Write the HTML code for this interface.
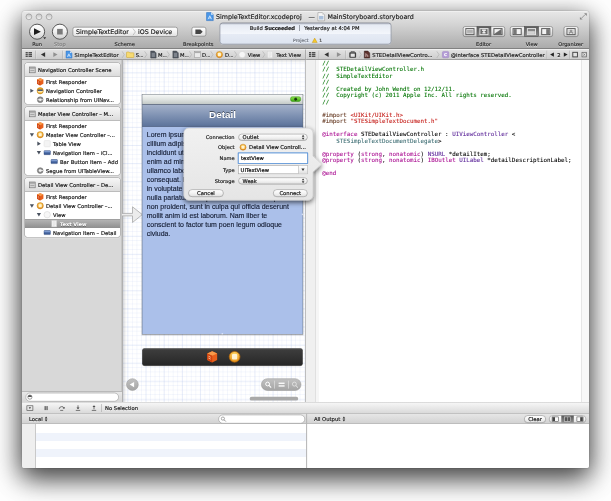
<!DOCTYPE html><html><head><meta charset="utf-8"><title>Xcode</title><style>
html,body{margin:0;padding:0;background:#fff;}
body{width:611px;height:501px;overflow:hidden;position:relative;font-family:"DejaVu Sans","Liberation Sans",sans-serif;}
div{position:absolute;box-sizing:border-box;}
.t{white-space:nowrap;line-height:10px;font-family:"DejaVu Sans","Liberation Sans",sans-serif;-webkit-text-stroke-width:.17px;text-shadow:0 .5px 0 rgba(255,255,255,.55);}
.p{white-space:nowrap;line-height:10px;font-family:"DejaVu Sans","Liberation Sans",sans-serif;-webkit-text-stroke-width:.17px;}
.e{letter-spacing:-.3px;opacity:.75}
.n{white-space:nowrap;font-family:"Liberation Sans",sans-serif;}
.m{white-space:pre;font-family:"DejaVu Sans Mono","Liberation Mono",monospace;font-size:5.84px;line-height:6.5px;color:#000;-webkit-text-stroke:.08px;}
svg{position:absolute;overflow:visible;}
#win{left:22px;top:11px;width:567px;height:457px;border-radius:3px 3px 2px 2px;background:#e4e4e4;
 box-shadow:0 0 1.2px rgba(0,0,0,.45),0 6px 24px rgba(0,0,0,.5),0 12px 28px rgba(0,0,0,.5);}
#clip{left:0;top:0;width:567px;height:457px;border-radius:3px 3px 2px 2px;overflow:hidden;}
#in{left:-22px;top:-11px;width:611px;height:501px;will-change:transform;}
.cm{color:#007400;-webkit-text-stroke-color:#007400}.pp{color:#643820;-webkit-text-stroke-color:#643820}.st{color:#c41a16;-webkit-text-stroke-color:#c41a16}.kw{color:#aa0d91;-webkit-text-stroke-color:#aa0d91}.cl{color:#5c2699;-webkit-text-stroke-color:#5c2699}.pc{color:#3f6e74;-webkit-text-stroke-color:#3f6e74}
</style></head><body>
<svg width="0" height="0" style="left:0;top:0"><defs>
<linearGradient id="gBtn" x1="0" y1="0" x2="0" y2="1"><stop offset="0" stop-color="#ffffff"/><stop offset=".5" stop-color="#f3f3f3"/><stop offset="1" stop-color="#dfdfdf"/></linearGradient>
<linearGradient id="gTb" x1="0" y1="0" x2="0" y2="1"><stop offset="0" stop-color="#f9f9f9"/><stop offset=".5" stop-color="#e6e6e6"/><stop offset="1" stop-color="#c9c9c9"/></linearGradient>
<linearGradient id="gSel" x1="0" y1="0" x2="0" y2="1"><stop offset="0" stop-color="#595959"/><stop offset="1" stop-color="#8c8c8c"/></linearGradient>
<linearGradient id="gRnd" x1="0" y1="0" x2="0" y2="1"><stop offset="0" stop-color="#ffffff"/><stop offset=".45" stop-color="#f2f2f2"/><stop offset="1" stop-color="#d0d0d0"/></linearGradient>
<linearGradient id="gAct" x1="0" y1="0" x2="0" y2="1"><stop offset="0" stop-color="#cfd6e4"/><stop offset=".1" stop-color="#e6ebf4"/><stop offset=".5" stop-color="#f3f6fb"/><stop offset=".52" stop-color="#e6ebf5"/><stop offset="1" stop-color="#dde4f0"/></linearGradient>
<linearGradient id="gPill" x1="0" y1="0" x2="0" y2="1"><stop offset="0" stop-color="#c2c2c2"/><stop offset="1" stop-color="#a4a4a4"/></linearGradient>
<linearGradient id="gTl" x1="0" y1="0" x2="0" y2="1"><stop offset="0" stop-color="#c4c4c4"/><stop offset="1" stop-color="#f4f4f4"/></linearGradient>
<radialGradient id="gVc" cx=".5" cy=".3" r=".75"><stop offset="0" stop-color="#ffdc6a"/><stop offset="1" stop-color="#e58a10"/></radialGradient>
<linearGradient id="gPop" x1="0" y1="0" x2="0" y2="1"><stop offset="0" stop-color="#f1f1f1"/><stop offset="1" stop-color="#e5e5e5"/></linearGradient>
<filter id="ps" x="-20%" y="-20%" width="140%" height="150%"><feGaussianBlur in="SourceAlpha" stdDeviation="2.8"/><feOffset dy="2.2"/><feComponentTransfer><feFuncA type="linear" slope=".62"/></feComponentTransfer><feMerge><feMergeNode/><feMergeNode in="SourceGraphic"/></feMerge></filter>
</defs></svg>
<div id="win"><div id="clip"><div id="in">
<div style="left:22px;top:11px;width:567px;height:38px;background:linear-gradient(#e6e6e6 0%,#d6d6d6 30%,#a9a9a9 100%);border-top:1px solid #f0f0f0;"></div>
<div style="left:22px;top:48px;width:567px;height:1px;background:#818181;"></div>
<svg style="left:22px;top:10px" width="37" height="15"><g transform="translate(-22,-10)"><circle cx="28.9" cy="16.8" r="2.9" fill="url(#gTl)" stroke="#8a8a8a" stroke-width=".6"/><circle cx="39" cy="16.8" r="2.9" fill="url(#gTl)" stroke="#8a8a8a" stroke-width=".6"/><circle cx="49.1" cy="16.8" r="2.9" fill="url(#gTl)" stroke="#8a8a8a" stroke-width=".6"/></g></svg>
<svg style="left:203px;top:9px" width="15" height="16"><g transform="translate(-203,-9)"><g transform="translate(206.228,12.280000000000001) scale(1.08)"><path d="M0.3 0.3h4.2l2 2v5.4h-6.2z" fill="#4a97e8" stroke="#2b6fc0" stroke-width=".5"/><path d="M4.5 .3v2h2z" fill="#d6e8fb"/><path d="M1.7 6.4l1.6-3.2 1.6 3.2M2.3 5.3h2" stroke="#fff" stroke-width=".6" fill="none"/></g></g></svg>
<div class="t" style="left:216.1px;top:11.90px;font-size:6.33px;color:#1a1a1a;-webkit-text-stroke-color:#1a1a1a;">SimpleTextEditor.xcodeproj</div>
<div class="t" style="left:308.6px;top:11.70px;font-size:6.33px;color:#333;-webkit-text-stroke-color:#333;">—</div>
<svg style="left:314px;top:9px" width="15" height="16"><g transform="translate(-314,-9)"><g transform="translate(317.6,12.3)"><path d="M0.3 0.3h4.5l2.2 2.2v6h-6.7z" fill="#f7f7f7" stroke="#8a8a8a" stroke-width=".5"/><path d="M1.4 3.6h4.4v3.6h-4.4z" fill="#a9c0dc"/><path d="M4.8 .3v2.2h2.2z" fill="#cfcfcf"/></g></g></svg>
<div class="t" style="left:327.5px;top:11.90px;font-size:6.33px;color:#1a1a1a;-webkit-text-stroke-color:#1a1a1a;">MainStoryboard.storyboard</div>
<svg style="left:576px;top:10px" width="15" height="15"><g transform="translate(-576,-10)"><g transform="translate(579.9,13)"><path d="M4.2 0.2h2.7v2.7zM2.7 6.6h-2.7v-2.7z" fill="#858585"/><path d="M1.6 5.2l3.6-3.6" stroke="#858585" stroke-width=".8"/></g></g></svg>
<svg style="left:26px;top:20px" width="23" height="23"><g transform="translate(-26,-20)"><circle cx="37.1" cy="31.7" r="7.55" fill="url(#gRnd)" stroke="#484848" stroke-width=".9"/><path d="M34 28.3L40.9 31.7 34 35.1z" fill="#1b1b1b"/><path d="M43.2 37.3h3l-1.5 2z" fill="#333"/></g></svg>
<svg style="left:48px;top:20px" width="23" height="23"><g transform="translate(-48,-20)"><circle cx="59.9" cy="31.7" r="7.55" fill="url(#gRnd)" stroke="#484848" stroke-width=".9"/><rect x="57.1" y="28.9" width="5.6" height="5.6" fill="#7a7a7a"/></g></svg>
<div class="t" style="left:-62.9px;width:200px;text-align:center;top:38.90px;font-size:5.1px;color:#2a2a2a;-webkit-text-stroke-color:#2a2a2a;">Run</div>
<div class="t" style="left:-40.1px;width:200px;text-align:center;top:38.90px;font-size:5.1px;color:#7e7e7e;-webkit-text-stroke-color:#7e7e7e;">Stop</div>
<svg style="left:69px;top:24px" width="112" height="17"><g transform="translate(-69,-24)"><rect x="72.9" y="27.2" width="104.6" height="9.3" rx="2" fill="url(#gBtn)" stroke="#767676" stroke-width="0.6" /><path d="M133 28.6L135.4 31.9 133 35.2" fill="none" stroke="#9a9a9a" stroke-width=".55"/></g></svg>
<div class="t" style="left:76px;top:26.90px;font-size:6.3px;color:#151515;-webkit-text-stroke-color:#151515;">SimpleTextEditor</div>
<div class="t" style="left:138px;top:26.90px;font-size:6.3px;color:#151515;-webkit-text-stroke-color:#151515;">iOS Device</div>
<div class="t" style="left:24.700000000000003px;width:200px;text-align:center;top:38.90px;font-size:5.1px;color:#2a2a2a;-webkit-text-stroke-color:#2a2a2a;">Scheme</div>
<svg style="left:188px;top:24px" width="22" height="17"><g transform="translate(-188,-24)"><rect x="191.9" y="27.2" width="14" height="9" rx="1.8" fill="url(#gBtn)" stroke="#767676" stroke-width="0.6" /><path d="M195.4 29.6h5l2.3 2.2-2.3 2.2h-5z" fill="#454545"/></g></svg>
<div class="t" style="left:98.19999999999999px;width:200px;text-align:center;top:38.90px;font-size:5.1px;color:#2a2a2a;-webkit-text-stroke-color:#2a2a2a;">Breakpoints</div>
<svg style="left:216px;top:19px" width="179" height="29"><g transform="translate(-216,-19)"><rect x="219.6" y="23.4" width="171.8" height="21.4" rx="3" fill="rgba(255,255,255,.5)" /><rect x="219.9" y="22.9" width="171.2" height="21.3" rx="2.8" fill="url(#gAct)" stroke="#7c838f" stroke-width="0.7" /><rect x="221" y="23.3" width="169" height="1" fill="rgba(0,0,0,.13)"/></g></svg>
<div class="t" style="right:316.1px;top:23.30px;font-size:5.25px;color:#1c1c1c;-webkit-text-stroke-color:#1c1c1c;">Build <b style="letter-spacing:-.18px">Succeeded</b></div>
<div style="left:299.4px;top:25.3px;width:0.6px;height:6px;background:#9aa0aa;"></div>
<div class="t" style="left:304.3px;top:23.30px;font-size:5.25px;color:#1c1c1c;-webkit-text-stroke-color:#1c1c1c;">Yesterday at 4:04 PM</div>
<div class="t" style="left:293px;top:35.50px;font-size:4.5px;color:#6d737d;-webkit-text-stroke-color:#6d737d;">Project</div>
<svg style="left:308px;top:34px" width="14" height="13"><g transform="translate(-308,-34)"><path d="M314.7 38.1L317.2 42.6H312.2z" fill="#f7c92a" stroke="#b98a10" stroke-width=".4"/></g></svg>
<div class="t" style="left:319.3px;top:35.50px;font-size:4.5px;color:#444;-webkit-text-stroke-color:#444;">1</div>
<svg style="left:459px;top:23px" width="50" height="18"><g transform="translate(-459,-23)"><rect x="463.2" y="26.6" width="41.5" height="10.0" rx="1.8" fill="url(#gTb)" stroke="#6d6d6d" stroke-width="0.6" /><rect x="476.93333333333334" y="26.6" width="14.033333333333333" height="10.0" fill="url(#gSel)" stroke="#484848" stroke-width=".5"/><g transform="translate(465.31466666666665,28.060000000000002) scale(1.18)"><rect x=".45" y=".45" width="6.9" height="5.1" fill="#f2f2f2" stroke="#5c5c5c" stroke-width=".85"/><rect x="1.3" y="1.3" width="5.2" height="3.4" fill="#cfcfcf"/><path d="M1.6 2h4.6M1.6 3h4.6M1.6 4h4.6" stroke="#8a8a8a" stroke-width=".4"/></g><g transform="translate(479.348,28.060000000000002) scale(1.18)"><rect x=".45" y=".45" width="6.9" height="5.1" fill="#6e6e6e" stroke="#e4e4e4" stroke-width=".85"/><path d="M2.3 1.3h3.2v1.2h-3.2zM3.3 2.5h1.2v.9h-1.2zM2.6 3.4h2.6v1.3h-2.6z" fill="#ededed"/></g><g transform="translate(493.3813333333333,28.060000000000002) scale(1.18)"><rect x=".45" y=".45" width="6.9" height="5.1" fill="#f2f2f2" stroke="#5c5c5c" stroke-width=".85"/><path d="M1 5L6.9 1V5z" fill="#6a6a6a"/><path d="M1 5L6.9 1" stroke="#555" stroke-width=".4"/></g></g></svg>
<div class="t" style="left:383.5px;width:200px;text-align:center;top:38.90px;font-size:5.1px;color:#2a2a2a;-webkit-text-stroke-color:#2a2a2a;">Editor</div>
<svg style="left:507px;top:23px" width="50" height="18"><g transform="translate(-507,-23)"><rect x="510.3" y="26.6" width="42.3" height="10.0" rx="1.8" fill="url(#gTb)" stroke="#6d6d6d" stroke-width="0.6" /><rect x="524.3" y="26.6" width="14.299999999999999" height="10.0" fill="url(#gSel)" stroke="#484848" stroke-width=".5"/><g transform="translate(512.548,28.060000000000002) scale(1.18)"><rect x=".45" y=".45" width="6.9" height="5.1" fill="#f2f2f2" stroke="#5c5c5c" stroke-width=".85"/><rect x=".9" y=".9" width="2.6" height="4.2" fill="#777"/></g><g transform="translate(526.8480000000001,28.060000000000002) scale(1.18)"><rect x=".45" y=".45" width="6.9" height="5.1" fill="#6e6e6e" stroke="#e4e4e4" stroke-width=".85"/><rect x="1" y="1" width="5.8" height="1.4" fill="#8a8a8a"/><rect x="1" y="2.6" width="5.8" height="2.4" fill="#d4d4d4"/></g><g transform="translate(541.148,28.060000000000002) scale(1.18)"><rect x=".45" y=".45" width="6.9" height="5.1" fill="#f2f2f2" stroke="#5c5c5c" stroke-width=".85"/><rect x="4.3" y=".9" width="2.6" height="4.2" fill="#777"/></g></g></svg>
<div class="t" style="left:431.70000000000005px;width:200px;text-align:center;top:38.90px;font-size:5.1px;color:#2a2a2a;-webkit-text-stroke-color:#2a2a2a;">View</div>
<svg style="left:560px;top:23px" width="22" height="18"><g transform="translate(-560,-23)"><rect x="564" y="26.6" width="14.1" height="10" rx="1.8" fill="url(#gTb)" stroke="#6d6d6d" stroke-width="0.6" /><g transform="translate(566.448,28.060000000000002) scale(1.18)"><rect x=".45" y=".45" width="6.9" height="5.1" fill="#f2f2f2" stroke="#5c5c5c" stroke-width=".85"/><rect x="1.3" y="1.3" width="5.2" height="3.4" fill="#d8d8d8"/><path d="M2.5 4.9v-1.2h2.8v1.2M3.2 1.9h1.4v1h-1.4z" fill="none" stroke="#666" stroke-width=".5"/></g></g></svg>
<div class="t" style="left:470.6px;width:200px;text-align:center;top:38.90px;font-size:5.1px;color:#2a2a2a;-webkit-text-stroke-color:#2a2a2a;">Organizer</div>
<div style="left:22px;top:49px;width:567px;height:11px;background:linear-gradient(#e2e2e2,#cacaca);border-top:.8px solid #f0f0f0;"></div>
<div style="left:22px;top:59px;width:567px;height:1px;background:#a0a0a0;"></div>
<svg style="left:0;top:0" width="611" height="62"><g transform="translate(25.6,52.1)"><path d="M0 0h2.2v1.3h-2.2zM2.9 0h3.5v1.3h-3.5zM0 1.85h2.2v1.3h-2.2zM2.9 1.85h3.5v1.3h-3.5zM0 3.7h2.2v1.3h-2.2zM2.9 3.7h3.5v1.3h-3.5z" fill="#505050"/></g><rect x="35.300000000000004" y="50.6" width=".55" height="8.2" fill="#a5a5a5"/><rect x="35.85" y="50.6" width=".5" height="8.2" fill="rgba(255,255,255,.45)"/><path d="M45.1 52.2V57.0L40.9 54.6z" fill="#333"/><path d="M53.3 52.2V57.0L57.5 54.6z" fill="#909090"/><rect x="62.5" y="50.6" width=".55" height="8.2" fill="#a5a5a5"/><rect x="63.05" y="50.6" width=".5" height="8.2" fill="rgba(255,255,255,.45)"/><g transform="translate(65.77,50.800000000000004) scale(0.95)"><path d="M0.3 0.3h4.2l2 2v5.4h-6.2z" fill="#4a97e8" stroke="#2b6fc0" stroke-width=".5"/><path d="M4.5 .3v2h2z" fill="#d6e8fb"/><path d="M1.7 6.4l1.6-3.2 1.6 3.2M2.3 5.3h2" stroke="#fff" stroke-width=".6" fill="none"/></g><path d="M122.1 51.300000000000004L124.3 54.6 122.1 57.9" fill="none" stroke="#a2a2a2" stroke-width=".5"/><g transform="translate(126.19999999999999,51.4)"><path d="M0.3 1.2q0-.6.6-.6h2l.7.8h3.5q.6 0 .6.6v3.5q0 .6-.6.6h-6.2q-.6 0-.6-.6z" fill="#f6da72" stroke="#c9a02c" stroke-width=".5"/></g><path d="M144.6 51.300000000000004L146.8 54.6 144.6 57.9" fill="none" stroke="#a2a2a2" stroke-width=".5"/><g transform="translate(150.4,50.800000000000004)"><path d="M0.3 0.3h3.6l1.8 1.8v5.2h-5.4z" fill="#545a63" stroke="#3a3f46" stroke-width=".5"/><path d="M1.3 3h3.2M1.3 4.2h3.2M1.3 5.4h3.2" stroke="#c9ced6" stroke-width=".5"/></g><path d="M167.1 51.300000000000004L169.3 54.6 167.1 57.9" fill="none" stroke="#a2a2a2" stroke-width=".5"/><g transform="translate(172.6,50.800000000000004)"><path d="M0.3 0.3h3.6l1.8 1.8v5.2h-5.4z" fill="#545a63" stroke="#3a3f46" stroke-width=".5"/><path d="M1.3 3h3.2M1.3 4.2h3.2M1.3 5.4h3.2" stroke="#c9ced6" stroke-width=".5"/></g><path d="M189.4 51.300000000000004L191.60000000000002 54.6 189.4 57.9" fill="none" stroke="#a2a2a2" stroke-width=".5"/><g transform="translate(194.2,51.2)"><rect x=".3" y=".3" width="6.2" height="6.2" fill="#ebebeb" stroke="#8f8f8f" stroke-width=".5"/><rect x=".3" y=".3" width="6.2" height="1.6" fill="#adadad"/></g><path d="M210.79999999999998 51.300000000000004L213.0 54.6 210.79999999999998 57.9" fill="none" stroke="#a2a2a2" stroke-width=".5"/><g transform="translate(216.0,51.2) scale(0.85)"><circle cx="4" cy="4" r="3.7" fill="url(#gVc)" stroke="#b8680a" stroke-width=".5"/><rect x="2.2" y="2.1" width="3.6" height="3.8" rx=".7" fill="#fff6dc" opacity=".92"/></g><path d="M234.5 51.300000000000004L236.70000000000002 54.6 234.5 57.9" fill="none" stroke="#a2a2a2" stroke-width=".5"/><circle cx="242.2" cy="54.6" r="3.1999999999999997" fill="#f7f7f7" stroke="#cdcdcd" stroke-width=".45"/><path d="M262.6 51.300000000000004L264.8 54.6 262.6 57.9" fill="none" stroke="#a2a2a2" stroke-width=".5"/><g transform="translate(267.4,51.2)"><rect x=".2" y=".2" width="4.8" height="6.4" fill="#f5f5f5" stroke="#d2d2d2" stroke-width=".4"/><path d="M1 1.6h3M1 2.8h3M1 4h3M1 5.2h2" stroke="#cfcfcf" stroke-width=".4"/></g><rect x="305.1" y="49.5" width="1" height="10" fill="#a6a6a6"/><rect x="306.1" y="49.5" width=".6" height="10" fill="rgba(255,255,255,.4)"/><g transform="translate(309.0,52.1)"><path d="M0 0h2.2v1.3h-2.2zM2.9 0h3.5v1.3h-3.5zM0 1.85h2.2v1.3h-2.2zM2.9 1.85h3.5v1.3h-3.5zM0 3.7h2.2v1.3h-2.2zM2.9 3.7h3.5v1.3h-3.5z" fill="#505050"/></g><rect x="318.7" y="50.6" width=".55" height="8.2" fill="#a5a5a5"/><rect x="319.25" y="50.6" width=".5" height="8.2" fill="rgba(255,255,255,.45)"/><path d="M328.59999999999997 52.2V57.0L324.4 54.6z" fill="#333"/><path d="M336.9 52.2V57.0L341.09999999999997 54.6z" fill="#909090"/><rect x="345.3" y="50.6" width=".55" height="8.2" fill="#a5a5a5"/><rect x="345.85" y="50.6" width=".5" height="8.2" fill="rgba(255,255,255,.45)"/><g transform="translate(349,51.2)"><rect x=".3" y="1" width="6.8" height="5.5" rx=".8" fill="#3d3d3d"/><path d="M2 1V.3h3.4V1" stroke="#3d3d3d" stroke-width=".6" fill="none"/><rect x="1.6" y="2.4" width="4.2" height="3.2" fill="#e6e6e6"/></g><path d="M359.1 51.300000000000004L361.3 54.6 359.1 57.9" fill="none" stroke="#a2a2a2" stroke-width=".5"/><g transform="translate(364,50.800000000000004)"><path d="M0.3 0.3h3.6l1.8 1.8v5.2h-5.4z" fill="#5e332e" stroke="#2e1a18" stroke-width=".5"/><path d="M1.8 2.4v3.8M1.8 4.4q1.2-1 2 0v1.8" stroke="#f0dada" stroke-width=".6" fill="none"/></g><path d="M436.8 51.300000000000004L439.0 54.6 436.8 57.9" fill="none" stroke="#a2a2a2" stroke-width=".5"/><rect x="442.4" y="51.4" width="6.4" height="6.4" rx="1.2" fill="#b49cd6" stroke="#9478bd" stroke-width="0.4" /><rect x="546.7" y="50.6" width=".55" height="8.2" fill="#a5a5a5"/><rect x="547.25" y="50.6" width=".5" height="8.2" fill="rgba(255,255,255,.45)"/><path d="M553.9 52.4V56.8L550.1 54.6z" fill="#222"/><path d="M563.8000000000001 52.4V56.8L567.6 54.6z" fill="#222"/><rect x="569.3000000000001" y="50.6" width=".55" height="8.2" fill="#a5a5a5"/><rect x="569.85" y="50.6" width=".5" height="8.2" fill="rgba(255,255,255,.45)"/><rect x="572.8" y="52.300000000000004" width="4.6" height="4.6" fill="#e4e4e4" stroke="#3c3c3c" stroke-width=".9"/><rect x="582" y="52.300000000000004" width="4.6" height="4.6" fill="#e4e4e4" stroke="#5c5c5c" stroke-width=".7"/><path d="M583.2 53.5l2.2 2.2m0-2.2l-2.2 2.2" stroke="#555" stroke-width=".55"/></svg>
<div class="t" style="left:74.6px;top:49.70px;font-size:5.25px;color:#1c1c1c;-webkit-text-stroke-color:#1c1c1c;">SimpleTextEditor</div>
<div class="t" style="left:135.7px;top:49.70px;font-size:5.25px;color:#1c1c1c;-webkit-text-stroke-color:#1c1c1c;">S<span class=e>...</span></div>
<div class="t" style="left:158px;top:49.70px;font-size:5.25px;color:#1c1c1c;-webkit-text-stroke-color:#1c1c1c;">M<span class=e>...</span></div>
<div class="t" style="left:180px;top:49.70px;font-size:5.25px;color:#1c1c1c;-webkit-text-stroke-color:#1c1c1c;">M<span class=e>...</span></div>
<div class="t" style="left:202px;top:49.70px;font-size:5.25px;color:#1c1c1c;-webkit-text-stroke-color:#1c1c1c;">D<span class=e>...</span></div>
<div class="t" style="left:225px;top:49.70px;font-size:5.25px;color:#1c1c1c;-webkit-text-stroke-color:#1c1c1c;">D<span class=e>...</span></div>
<div class="t" style="left:247.8px;top:49.70px;font-size:5.25px;color:#1c1c1c;-webkit-text-stroke-color:#1c1c1c;">View</div>
<div class="t" style="left:276.2px;top:49.70px;font-size:5.25px;color:#1c1c1c;-webkit-text-stroke-color:#1c1c1c;">Text View</div>
<div class="t" style="left:372.3px;top:49.70px;font-size:5.25px;color:#1c1c1c;-webkit-text-stroke-color:#1c1c1c;">STEDetailViewContro...</div>
<div class="t" style="left:450.7px;top:49.70px;font-size:5.25px;color:#1c1c1c;-webkit-text-stroke-color:#1c1c1c;">@interface STEDetailViewController</div>
<div class="t" style="left:345.5px;width:200px;text-align:center;top:49.70px;font-size:4.0px;color:#fff;-webkit-text-stroke-color:#fff;font-weight:bold;text-shadow:none;">C</div>
<div class="t" style="left:458.79999999999995px;width:200px;text-align:center;top:49.70px;font-size:5.25px;color:#1c1c1c;-webkit-text-stroke-color:#1c1c1c;">2</div>
<div style="left:22px;top:60px;width:100px;height:342px;background:#d8d8d8;"></div>
<div style="left:121px;top:60px;width:1px;height:342px;background:#c6c6c6;"></div>
<div style="left:122px;top:60px;width:1px;height:342px;background:#b0b0b0;"></div>
<div style="left:24.5px;top:63px;width:95px;height:40.5px;background:#fff;border-radius:2.5px;box-shadow:0 0 0 .6px #9d9d9d,0 1px 0 .3px rgba(255,255,255,.55);"></div><div style="left:24.5px;top:63px;width:95px;height:14px;background:linear-gradient(#f7f7f7,#dcdcdc);border-bottom:1px solid #bcbcbc;border-radius:2.5px 2.5px 0 0;"></div><div class="t" style="left:38px;top:65.00px;font-size:5.25px;color:#151515;-webkit-text-stroke-color:#151515;">Navigation Controller Scene</div><div class="p" style="left:46px;top:76.80px;font-size:5.25px;color:#151515;-webkit-text-stroke-color:#151515;">First Responder</div><div class="p" style="left:46px;top:85.75px;font-size:5.25px;color:#151515;-webkit-text-stroke-color:#151515;">Navigation Controller</div><div class="p" style="left:46px;top:94.70px;font-size:5.25px;color:#151515;-webkit-text-stroke-color:#151515;">Relationship from UINav...</div>
<div style="left:24.5px;top:107px;width:95px;height:67.5px;background:#fff;border-radius:2.5px;box-shadow:0 0 0 .6px #9d9d9d,0 1px 0 .3px rgba(255,255,255,.55);"></div><div style="left:24.5px;top:107px;width:95px;height:14px;background:linear-gradient(#f7f7f7,#dcdcdc);border-bottom:1px solid #bcbcbc;border-radius:2.5px 2.5px 0 0;"></div><div class="t" style="left:38px;top:109.00px;font-size:5.25px;color:#151515;-webkit-text-stroke-color:#151515;">Master View Controller – M...</div><div class="p" style="left:46px;top:120.80px;font-size:5.25px;color:#151515;-webkit-text-stroke-color:#151515;">First Responder</div><div class="p" style="left:46px;top:129.75px;font-size:5.25px;color:#151515;-webkit-text-stroke-color:#151515;">Master View Controller –...</div><div class="p" style="left:53px;top:138.70px;font-size:5.25px;color:#151515;-webkit-text-stroke-color:#151515;">Table View</div><div class="p" style="left:53px;top:147.65px;font-size:5.25px;color:#151515;-webkit-text-stroke-color:#151515;">Navigation Item – iCl...</div><div class="p" style="left:60px;top:156.60px;font-size:5.25px;color:#151515;-webkit-text-stroke-color:#151515;">Bar Button Item – Add</div><div class="p" style="left:46px;top:165.55px;font-size:5.25px;color:#151515;-webkit-text-stroke-color:#151515;">Segue from UITableView...</div>
<div style="left:24.5px;top:178px;width:95px;height:58.5px;background:#fff;border-radius:2.5px;box-shadow:0 0 0 .6px #9d9d9d,0 1px 0 .3px rgba(255,255,255,.55);"></div><div style="left:24.5px;top:178px;width:95px;height:14px;background:linear-gradient(#f7f7f7,#dcdcdc);border-bottom:1px solid #bcbcbc;border-radius:2.5px 2.5px 0 0;"></div><div class="t" style="left:38px;top:180.00px;font-size:5.25px;color:#151515;-webkit-text-stroke-color:#151515;">Detail View Controller – De...</div><div class="p" style="left:46px;top:191.80px;font-size:5.25px;color:#151515;-webkit-text-stroke-color:#151515;">First Responder</div><div class="p" style="left:46px;top:200.75px;font-size:5.25px;color:#151515;-webkit-text-stroke-color:#151515;">Detail View Controller –...</div><div class="p" style="left:53px;top:209.70px;font-size:5.25px;color:#151515;-webkit-text-stroke-color:#151515;">View</div><div style="left:24.5px;top:219.05px;width:95px;height:9px;background:linear-gradient(#b3b3b3,#8f8f8f);border-top:1px solid #a0a0a0;"></div><div class="t" style="left:60px;top:218.65px;font-size:4.95px;color:#fff;-webkit-text-stroke-color:#fff;font-weight:bold;text-shadow:0 .5px 0 rgba(0,0,0,.3);-webkit-text-stroke-width:0;">Text View</div><div class="p" style="left:53px;top:227.60px;font-size:5.25px;color:#151515;-webkit-text-stroke-color:#151515;">Navigation Item – Detail</div>
<svg style="left:0;top:0" width="130" height="250"><g transform="translate(29.099999999999998,66.7)"><rect x=".3" y=".3" width="5.8" height="5.8" fill="#d2d2d2" stroke="#6c6c6c" stroke-width=".6"/><rect x=".6" y=".6" width="5.2" height="1.3" fill="#9a9a9a"/><path d="M1.2 3.8h4" stroke="#8b8b8b" stroke-width=".6"/></g><g transform="translate(36.800000000000004,78.0) scale(1.0)"><path d="M3.4 .2L6.6 1.6V5.8L3.4 7.4 .2 5.8V1.6z" fill="#e8601c"/><path d="M3.4 .2L6.6 1.6 3.4 3.2 .2 1.6z" fill="#f79a4a"/><path d="M3.4 3.2V7.4L.2 5.8V1.6z" fill="#d2440f"/><path d="M1 3.4l1.4.7M1 4.6l1.4.7" stroke="#ffd9b8" stroke-width=".5"/></g><path d="M30.299999999999997 88.65v4.2l3.5-2.1z" fill="#4b5360"/><g transform="translate(36.800000000000004,87.35) scale(.85)"><circle cx="4" cy="4" r="3.7" fill="#f0a81c" stroke="#a8690a" stroke-width=".5"/><rect x="1.1" y="2.5" width="5.8" height="1.9" fill="#4a5a78"/><path d="M1.1 4.4h5.8v1q-2.9 1.6-5.8 0z" fill="#ffe9a8"/></g><g transform="translate(36.900000000000006,96.39999999999999) scale(.825)"><circle cx="4" cy="4" r="3.5" fill="#8e8e8e" stroke="#5e5e5e" stroke-width=".6"/><circle cx="4" cy="4" r="1.5" fill="#f4f4f4"/><path d="M.8 4h2M5.2 4h2" stroke="#f4f4f4" stroke-width="1"/></g><g transform="translate(29.099999999999998,110.7)"><rect x=".3" y=".3" width="5.8" height="5.8" fill="#d2d2d2" stroke="#6c6c6c" stroke-width=".6"/><rect x=".6" y=".6" width="5.2" height="1.3" fill="#9a9a9a"/><path d="M1.2 3.8h4" stroke="#8b8b8b" stroke-width=".6"/></g><g transform="translate(36.800000000000004,122.0) scale(1.0)"><path d="M3.4 .2L6.6 1.6V5.8L3.4 7.4 .2 5.8V1.6z" fill="#e8601c"/><path d="M3.4 .2L6.6 1.6 3.4 3.2 .2 1.6z" fill="#f79a4a"/><path d="M3.4 3.2V7.4L.2 5.8V1.6z" fill="#d2440f"/><path d="M1 3.4l1.4.7M1 4.6l1.4.7" stroke="#ffd9b8" stroke-width=".5"/></g><path d="M29.799999999999997 133.15h4.2l-2.1 3.5z" fill="#4b5360"/><g transform="translate(36.800000000000004,131.35) scale(0.85)"><circle cx="4" cy="4" r="3.7" fill="url(#gVc)" stroke="#b8680a" stroke-width=".5"/><rect x="2.2" y="2.1" width="3.6" height="3.8" rx=".7" fill="#fff6dc" opacity=".92"/></g><path d="M37.3 141.6v4.2l3.5-2.1z" fill="#4b5360"/><rect x="44.1" y="140.6" width="6.2" height="6.2" rx=".8" fill="#f4f4f4" stroke="#dadada" stroke-width=".4"/><path d="M36.8 151.05h4.2l-2.1 3.5z" fill="#4b5360"/><g transform="translate(43.800000000000004,150.45000000000002)"><rect x=".2" y=".2" width="6.4" height="4" rx=".5" fill="#3f5f9a" stroke="#2b4272" stroke-width=".4"/><rect x=".4" y=".4" width="6" height="1.5" fill="#7e9bd0"/></g><g transform="translate(50.800000000000004,159.4)"><rect x=".2" y=".2" width="6.4" height="4" rx=".5" fill="#3f5f9a" stroke="#2b4272" stroke-width=".4"/><rect x=".4" y=".4" width="6" height="1.5" fill="#7e9bd0"/></g><g transform="translate(36.900000000000006,167.25) scale(.825)"><circle cx="4" cy="4" r="3.5" fill="#8e8e8e" stroke="#5e5e5e" stroke-width=".6"/><circle cx="4" cy="4" r="1.7" fill="#f4f4f4"/><path d="M5 4h2.4" stroke="#f4f4f4" stroke-width="1"/></g><g transform="translate(29.099999999999998,181.70000000000002)"><rect x=".3" y=".3" width="5.8" height="5.8" fill="#d2d2d2" stroke="#6c6c6c" stroke-width=".6"/><rect x=".6" y=".6" width="5.2" height="1.3" fill="#9a9a9a"/><path d="M1.2 3.8h4" stroke="#8b8b8b" stroke-width=".6"/></g><g transform="translate(36.800000000000004,193.0) scale(1.0)"><path d="M3.4 .2L6.6 1.6V5.8L3.4 7.4 .2 5.8V1.6z" fill="#e8601c"/><path d="M3.4 .2L6.6 1.6 3.4 3.2 .2 1.6z" fill="#f79a4a"/><path d="M3.4 3.2V7.4L.2 5.8V1.6z" fill="#d2440f"/><path d="M1 3.4l1.4.7M1 4.6l1.4.7" stroke="#ffd9b8" stroke-width=".5"/></g><path d="M29.799999999999997 204.15h4.2l-2.1 3.5z" fill="#4b5360"/><g transform="translate(36.800000000000004,202.35) scale(0.85)"><circle cx="4" cy="4" r="3.7" fill="url(#gVc)" stroke="#b8680a" stroke-width=".5"/><rect x="2.2" y="2.1" width="3.6" height="3.8" rx=".7" fill="#fff6dc" opacity=".92"/></g><path d="M36.8 213.10000000000002h4.2l-2.1 3.5z" fill="#4b5360"/><circle cx="47.2" cy="214.70000000000002" r="3.1999999999999997" fill="#f7f7f7" stroke="#cdcdcd" stroke-width=".45"/><g transform="translate(51.6,220.25)"><rect x=".2" y=".2" width="4.8" height="6.4" fill="#f5f5f5" stroke="#d2d2d2" stroke-width=".4"/><path d="M1 1.6h3M1 2.8h3M1 4h3M1 5.2h2" stroke="#cfcfcf" stroke-width=".4"/></g><g transform="translate(43.800000000000004,230.40000000000003)"><rect x=".2" y=".2" width="6.4" height="4" rx=".5" fill="#3f5f9a" stroke="#2b4272" stroke-width=".4"/><rect x=".4" y=".4" width="6" height="1.5" fill="#7e9bd0"/></g></svg>
<div style="left:22px;top:391px;width:100px;height:11.5px;background:linear-gradient(#e8e8e8,#d4d4d4);border-top:1px solid #b9b9b9;"></div>
<svg style="left:22px;top:389px" width="101" height="16"><g transform="translate(-22,-389)"><rect x="25.8" y="393" width="92.8" height="8.3" rx="4.15" fill="#fff" stroke="#999" stroke-width="0.6" /><circle cx="29.9" cy="397.1" r="2.1" fill="#fff" stroke="#555" stroke-width=".55"/><path d="M27.9 396.9h4a2 2 0 0 0-4 0z" fill="#555"/></g></svg>
<div style="left:123px;top:60px;width:182px;height:342.5px;background-color:#fff;background-image:linear-gradient(90deg,rgba(160,180,230,.17) 0,rgba(160,180,230,.17) 1px,transparent 1px),linear-gradient(180deg,rgba(160,180,230,.17) 0,rgba(160,180,230,.17) 1px,transparent 1px),linear-gradient(90deg,rgba(170,190,235,.13) 0,rgba(170,190,235,.13) 1px,transparent 1px),linear-gradient(180deg,rgba(170,190,235,.13) 0,rgba(170,190,235,.13) 1px,transparent 1px);background-size:18.172px 18.172px,18.172px 18.172px,4.543px 4.543px,4.543px 4.543px;background-position:4.40px 0,0 12.42px,4.40px 0,0 12.42px;box-shadow:inset 2px 1.5px 2.5px rgba(0,0,0,.13);"></div>
<svg style="left:119px;top:202px" width="29" height="27"><g transform="translate(-119,-202)"><path d="M122 213.4H132.5V206.8L142.3 214.6 132.5 222.5V215.9H122" fill="#ececec" stroke="#a8a8a8" stroke-width=".8"/></g></svg>
<div style="left:141px;top:93.5px;width:163px;height:242px;box-shadow:none;"></div>
<svg style="left:139px;top:91px" width="168" height="247"><g transform="translate(-139,-91)"><rect x="141.5" y="94.2" width="162.0" height="241.3" fill="rgba(0,0,0,.16)"/><rect x="141.9" y="94.1" width="161.20000000000002" height="240.3" fill="#5d6570"/><linearGradient id="gSb" x1="0" y1="0" x2="0" y2="1"><stop offset="0" stop-color="#f6f8f7"/><stop offset=".5" stop-color="#e0e4e2"/><stop offset="1" stop-color="#c2c8c5"/></linearGradient><linearGradient id="gNb" x1="0" y1="0" x2="0" y2="1"><stop offset="0" stop-color="#a6b3cb"/><stop offset=".5" stop-color="#7f92b3"/><stop offset="1" stop-color="#5b729a"/></linearGradient><linearGradient id="gBat" x1="0" y1="0" x2="0" y2="1"><stop offset="0" stop-color="#93e653"/><stop offset="1" stop-color="#3aa80f"/></linearGradient><rect x="142.3" y="94.5" width="160.4" height="9.8" fill="url(#gSb)"/><rect x="142.3" y="104.3" width="160.4" height="22.4" fill="url(#gNb)"/><rect x="142.3" y="104.1" width="160.4" height=".6" fill="#4d5a70"/><rect x="142.3" y="126.2" width="160.4" height=".6" fill="#3e4f6e"/><rect x="142.3" y="126.8" width="160.4" height="207.2" fill="#abc0ea"/><rect x="290.6" y="96.8" width="10" height="4.6" rx="1.6" fill="url(#gBat)" stroke="#2f8a0c" stroke-width="0.5" /><path d="M296.6 97.4l-2.4 2h1.6l-.9 1.7 2.6-2.1h-1.6z" fill="#10240a"/><ellipse cx="295.6" cy="99.1" rx="1.5" ry="1.5" fill="#142a0c" opacity=".75"/><rect x="221.6" y="333.3" width="1.5" height="1" fill="#e8eefc"/><rect x="301.8" y="213.6" width="1" height="1.5" fill="#e8eefc"/></g></svg>
<div class="n" style="left:142.3px;width:160.4px;text-align:center;top:109.1px;line-height:12px;font-size:9.9px;font-weight:bold;color:#fff;text-shadow:0 -.6px 0 rgba(0,0,0,.5);">Detail</div>
<div class="n" style="left:146.8px;top:129.80px;line-height:10px;font-size:6.98px;color:#121a30;-webkit-text-stroke:.12px #121a30;">Lorem ipsum dolor sit er elit lamet, consectetaur</div>
<div class="n" style="left:146.8px;top:138.84px;line-height:10px;font-size:6.98px;color:#121a30;-webkit-text-stroke:.12px #121a30;">cillium adipisicing pecu, sed do eiusmod tempor</div>
<div class="n" style="left:146.8px;top:147.88px;line-height:10px;font-size:6.98px;color:#121a30;-webkit-text-stroke:.12px #121a30;">incididunt ut labore et dolore magna aliqua. Ut</div>
<div class="n" style="left:146.8px;top:156.92px;line-height:10px;font-size:6.98px;color:#121a30;-webkit-text-stroke:.12px #121a30;">enim ad minim veniam, quis nostrud exercitation</div>
<div class="n" style="left:146.8px;top:165.96px;line-height:10px;font-size:6.98px;color:#121a30;-webkit-text-stroke:.12px #121a30;">ullamco laboris nisi ut aliquip ex ea commodo</div>
<div class="n" style="left:146.8px;top:175.00px;line-height:10px;font-size:6.98px;color:#121a30;-webkit-text-stroke:.12px #121a30;">consequat. Duis aute irure dolor in reprehenderit</div>
<div class="n" style="left:146.8px;top:184.04px;line-height:10px;font-size:6.98px;color:#121a30;-webkit-text-stroke:.12px #121a30;">in voluptate velit esse cillum dolore eu fugiat</div>
<div class="n" style="left:146.8px;top:193.08px;line-height:10px;font-size:6.98px;color:#121a30;-webkit-text-stroke:.12px #121a30;">nulla pariatur. Excepteur sint occaecat cupidatat</div>
<div class="n" style="left:146.8px;top:202.12px;line-height:10px;font-size:6.98px;color:#121a30;-webkit-text-stroke:.12px #121a30;">non proident, sunt in culpa qui officia deserunt</div>
<div class="n" style="left:146.8px;top:211.16px;line-height:10px;font-size:6.98px;color:#121a30;-webkit-text-stroke:.12px #121a30;">mollit anim id est laborum. Nam liber te</div>
<div class="n" style="left:146.8px;top:220.20px;line-height:10px;font-size:6.98px;color:#121a30;-webkit-text-stroke:.12px #121a30;">conscient to factor tum poen legum odioque</div>
<div class="n" style="left:146.8px;top:229.24px;line-height:10px;font-size:6.98px;color:#121a30;-webkit-text-stroke:.12px #121a30;">civiuda.</div>
<svg style="left:139px;top:345px" width="168" height="25"><g transform="translate(-139,-345)"><linearGradient id="gDk" x1="0" y1="0" x2="0" y2="1"><stop offset="0" stop-color="#505050"/><stop offset=".12" stop-color="#3c3c3c"/><stop offset=".6" stop-color="#303030"/><stop offset="1" stop-color="#262626"/></linearGradient><rect x="142.2" y="348.6" width="160.5" height="17.6" rx="2.4" fill="rgba(0,0,0,.25)" /><rect x="142.2" y="348.2" width="160.5" height="17.5" rx="2.2" fill="url(#gDk)" /><g transform="translate(206.92999999999998,350.91) scale(1.55)"><path d="M3.4 .2L6.6 1.6V5.8L3.4 7.4 .2 5.8V1.6z" fill="#e8601c"/><path d="M3.4 .2L6.6 1.6 3.4 3.2 .2 1.6z" fill="#f79a4a"/><path d="M3.4 3.2V7.4L.2 5.8V1.6z" fill="#d2440f"/><path d="M1 3.4l1.4.7M1 4.6l1.4.7" stroke="#ffd9b8" stroke-width=".5"/></g><g transform="translate(228.79999999999998,351.0) scale(1.45)"><circle cx="4" cy="4" r="3.7" fill="url(#gVc)" stroke="#b8680a" stroke-width=".5"/><rect x="2.2" y="2.1" width="3.6" height="3.8" rx=".7" fill="#fff6dc" opacity=".92"/></g></g></svg>
<svg style="left:0;top:370px" width="310" height="35"><g transform="translate(0,-370)"><rect x="126.5" y="379.3" width="11.8" height="11.8" rx="5.9" fill="rgba(255,255,255,.8)" /><rect x="126.5" y="378.7" width="11.8" height="11.8" rx="5.9" fill="url(#gPill)" stroke="#929292" stroke-width="0.5" /><path d="M134.10000000000002 382.0V387.2L129.70000000000002 384.6z" fill="#fff"/><rect x="261.4" y="379.3" width="39.6" height="11.8" rx="5.9" fill="rgba(255,255,255,.8)" /><rect x="261.4" y="378.7" width="39.6" height="11.8" rx="5.9" fill="url(#gPill)" stroke="#929292" stroke-width="0.5" /><rect x="274.4" y="380.6" width=".6" height="8" fill="#e6e6e6"/><rect x="288.4" y="380.6" width=".6" height="8" fill="#e6e6e6"/><circle cx="267.6" cy="384" r="1.9" fill="none" stroke="#fff" stroke-width="1"/><path d="M269 385.4l2.2 2.2" stroke="#fff" stroke-width="1.1"/><rect x="278.6" y="382.6" width="6" height="1.3" fill="#fff"/><rect x="278.6" y="385.3" width="6" height="1.3" fill="#fff"/><circle cx="294.4" cy="384.1" r="2" fill="none" stroke="#ececec" stroke-width=".7"/><path d="M295.8 385.5l2.2 2.2" stroke="#ececec" stroke-width=".9"/><rect x="249.7" y="396.8" width="48.5" height="3.8" rx="1.9" fill="#a9a9a9" /></g></svg>
<svg style="left:300px;top:60px" width="10" height="343"><rect x="5.2" y="0" width="1" height="342.4" fill="#b4b4b4"/></svg>
<div style="left:306px;top:60px;width:283px;height:342.5px;background:#fff;"></div>
<div style="left:306px;top:60px;width:10px;height:342.5px;background:#f0f0f0;border-right:1px solid #e0e0e0;"></div>
<div style="left:581px;top:60px;width:8px;height:342.5px;background:#f8f8f8;border-left:1px solid #e6e6e6;"></div>
<div style="left:316px;top:60px;width:2.6px;height:342.5px;background:#f6f6f6;"></div>
<div class="m" style="left:322.3px;top:59.95px;"><span class="cm">//</span></div>
<div class="m" style="left:322.3px;top:66.45px;"><span class="cm">//  STEDetailViewController.h</span></div>
<div class="m" style="left:322.3px;top:72.95px;"><span class="cm">//  SimpleTextEditor</span></div>
<div class="m" style="left:322.3px;top:79.45px;"><span class="cm">//</span></div>
<div class="m" style="left:322.3px;top:85.95px;"><span class="cm">//  Created by John Wendt on 12/12/11.</span></div>
<div class="m" style="left:322.3px;top:92.45px;"><span class="cm">//  Copyright (c) 2011 Apple Inc. All rights reserved.</span></div>
<div class="m" style="left:322.3px;top:98.95px;"><span class="cm">//</span></div>
<div class="m" style="left:322.3px;top:111.95px;"><span class="pp">#import </span><span class="st">&lt;UIKit/UIKit.h&gt;</span></div>
<div class="m" style="left:322.3px;top:118.45px;"><span class="pp">#import </span><span class="st">"STESimpleTextDocument.h"</span></div>
<div class="m" style="left:322.3px;top:131.45px;"><span class="kw">@interface</span> STEDetailViewController : <span class="cl">UIViewController</span> &lt;</div>
<div class="m" style="left:322.3px;top:137.95px;">    <span class="pc">STESimpleTextDocumentDelegate</span>&gt;</div>
<div class="m" style="left:322.3px;top:150.95px;"><span class="kw">@property</span> (<span class="kw">strong</span>, <span class="kw">nonatomic</span>) <span class="cl">NSURL</span> *detailItem;</div>
<div class="m" style="left:322.3px;top:157.45px;"><span class="kw">@property</span> (<span class="kw">strong</span>, <span class="kw">nonatomic</span>) <span class="kw">IBOutlet</span> <span class="cl">UILabel</span> *detailDescriptionLabel;</div>
<div class="m" style="left:322.3px;top:170.45px;"><span class="kw">@end</span></div>
<svg style="left:174px;top:118px" width="159" height="93"><g transform="translate(-174,-118)"><path filter="url(#ps)" d="M188.8 128.1H308a5 5 0 0 1 5 5V156l8.8 8 -8.8 8V195.2a5 5 0 0 1 -5 5H188.8a5 5 0 0 1 -5 -5V133.1a5 5 0 0 1 5 -5z" fill="url(#gPop)" stroke="#c2c2c2" stroke-width=".5"/></g></svg>
<svg style="left:180px;top:125px" width="135" height="80"><g transform="translate(-180,-125)"><rect x="238.60000000000002" y="134.5" width="68.7" height="6.300000000000001" rx="3.1500000000000004" fill="rgba(0,0,0,.10)" /><rect x="238.60000000000002" y="134.10000000000002" width="68.7" height="6.300000000000001" rx="3.1500000000000004" fill="url(#gBtn)" stroke="#8e8e8e" stroke-width="0.55" /><path d="M301.8 136.75l1.3-1.9 1.3 1.9zM301.8 137.75l1.3 1.9 1.3-1.9z" fill="#333"/><rect x="238.60000000000002" y="178.1" width="68.7" height="6.300000000000001" rx="3.1500000000000004" fill="rgba(0,0,0,.10)" /><rect x="238.60000000000002" y="177.70000000000002" width="68.7" height="6.300000000000001" rx="3.1500000000000004" fill="url(#gBtn)" stroke="#8e8e8e" stroke-width="0.55" /><path d="M301.8 180.35l1.3-1.9 1.3 1.9zM301.8 181.35l1.3 1.9 1.3-1.9z" fill="#333"/><g transform="translate(239.7,143.89999999999998) scale(0.825)"><circle cx="4" cy="4" r="3.7" fill="url(#gVc)" stroke="#b8680a" stroke-width=".5"/><rect x="2.2" y="2.1" width="3.6" height="3.8" rx=".7" fill="#fff6dc" opacity=".92"/></g><rect x="237.6" y="152.3" width="70.7" height="11.8" rx="1.2" fill="rgba(100,156,226,.55)"/><rect x="238.3" y="153" width="69.3" height="10.4" fill="#fff" stroke="#5b93d6" stroke-width=".8"/><rect x="238.5" y="165.5" width="69" height="8.3" fill="#fff" stroke="#9c9c9c" stroke-width=".55"/><rect x="298.6" y="165.8" width="8.6" height="7.7" fill="url(#gBtn)"/><rect x="298.4" y="165.8" width=".5" height="7.7" fill="#a8a8a8"/><path d="M301.4 168.4h3.2l-1.6 2.6z" fill="#333"/><rect x="188.5" y="190.0" width="34.9" height="7.1000000000000005" rx="3.5500000000000003" fill="rgba(0,0,0,.10)" /><rect x="188.5" y="189.60000000000002" width="34.9" height="7.1000000000000005" rx="3.5500000000000003" fill="url(#gBtn)" stroke="#8e8e8e" stroke-width="0.55" /><rect x="273.3" y="190.0" width="34.0" height="7.1000000000000005" rx="3.5500000000000003" fill="rgba(0,0,0,.10)" /><rect x="273.3" y="189.60000000000002" width="34.0" height="7.1000000000000005" rx="3.5500000000000003" fill="url(#gBtn)" stroke="#8e8e8e" stroke-width="0.55" /></g></svg>
<div class="t" style="right:376.4px;top:132.20px;font-size:5.1px;color:#151515;-webkit-text-stroke-color:#151515;">Connection</div>
<div class="p" style="left:242.5px;top:132.30px;font-size:5.25px;color:#111;-webkit-text-stroke-color:#111;">Outlet</div>
<div class="t" style="right:376.4px;top:142.30px;font-size:5.1px;color:#151515;-webkit-text-stroke-color:#151515;">Object</div>
<div class="p" style="left:249.1px;top:142.30px;font-size:5.25px;color:#111;-webkit-text-stroke-color:#111;">Detail View Controll...</div>
<div class="t" style="right:376.4px;top:153.30px;font-size:5.1px;color:#151515;-webkit-text-stroke-color:#151515;">Name</div>
<div class="p" style="left:241px;top:153.30px;font-size:5.25px;color:#000;-webkit-text-stroke-color:#000;">textView</div>
<div class="t" style="right:376.4px;top:164.60px;font-size:5.1px;color:#151515;-webkit-text-stroke-color:#151515;">Type</div>
<div class="p" style="left:240.6px;top:164.70px;font-size:5.25px;color:#000;-webkit-text-stroke-color:#000;">UITextView</div>
<div class="t" style="right:376.4px;top:175.70px;font-size:5.1px;color:#151515;-webkit-text-stroke-color:#151515;">Storage</div>
<div class="p" style="left:242.5px;top:175.90px;font-size:5.25px;color:#111;-webkit-text-stroke-color:#111;">Weak</div>
<div class="p" style="left:105.94999999999999px;width:200px;text-align:center;top:188.30px;font-size:5.25px;color:#111;-webkit-text-stroke-color:#111;">Cancel</div>
<div class="p" style="left:190.3px;width:200px;text-align:center;top:188.30px;font-size:5.25px;color:#111;-webkit-text-stroke-color:#111;">Connect</div>
<div style="left:22px;top:402px;width:567px;height:11.4px;background:linear-gradient(#c9c9c9 0,#f5f5f5 1.2px,#dadada 100%);"></div>
<div style="left:22px;top:413px;width:567px;height:11.6px;background:linear-gradient(#a2a2a2 0,#e6e6e6 1.1px,#d2d2d2 10.4px,#a8a8a8 10.6px);"></div>
<svg style="left:0;top:400px" width="611" height="30"><g transform="translate(0,-400)"><g transform="translate(26.6,405.5)"><rect x=".3" y=".3" width="6" height="4.6" fill="none" stroke="#444" stroke-width=".6"/><path d="M2.1 1.8h2.4L3.3 3.6z" fill="#444"/></g><rect x="44.6" y="406.1" width="1.1" height="4" fill="#444"/><rect x="46.5" y="406.1" width="1.1" height="4" fill="#444"/><g transform="translate(58.6,405.5)"><path d="M.6 3.4A2.6 2.4 0 0 1 5.6 2.6" fill="none" stroke="#444" stroke-width=".7"/><path d="M6.3 1.6L5.6 3.6 4 2.4z" fill="#444"/><path d="M1.6 4.9h3" stroke="#444" stroke-width=".7"/></g><g transform="translate(75.6,405.3)"><path d="M2.4 0v3.4" stroke="#444" stroke-width=".7"/><path d="M.9 2.2h3L2.4 4z" fill="#444"/><path d="M.2 5.1h4.4" stroke="#444" stroke-width=".7"/></g><g transform="translate(91.6,405.3)"><path d="M2.4 .8v3.2" stroke="#444" stroke-width=".7"/><path d="M.9 1.8h3L2.4 0z" fill="#444"/><path d="M.2 5.1h4.4" stroke="#444" stroke-width=".7"/></g><rect x="101" y="404" width=".6" height="8" fill="#a9a9a9"/><path d="M44.8 418.5l1.3-1.9 1.3 1.9zM44.8 419.5l1.3 1.9 1.3-1.9z" fill="#222"/><path d="M342.6 418.5l1.3-1.9 1.3 1.9zM342.6 419.5l1.3 1.9 1.3-1.9z" fill="#222"/><rect x="218.6" y="414.9" width="86.2" height="8.4" rx="4.2" fill="#fff" stroke="#999" stroke-width="0.6" /><circle cx="222.9" cy="418.6" r="1.6" fill="none" stroke="#666" stroke-width=".55"/><path d="M224.1 419.8l1.7 1.7" stroke="#666" stroke-width=".7"/><rect x="524.3" y="415.9" width="21.4" height="7.2" rx="3.6" fill="rgba(0,0,0,.10)" /><rect x="524.3" y="415.5" width="21.4" height="7.2" rx="3.6" fill="url(#gBtn)" stroke="#8e8e8e" stroke-width="0.55" /><rect x="549.1999999999999" y="415.9" width="36.699999999999996" height="7.2" rx="3.6" fill="rgba(0,0,0,.10)" /><rect x="549.1999999999999" y="415.5" width="36.699999999999996" height="7.2" rx="3.6" fill="url(#gBtn)" stroke="#8e8e8e" stroke-width="0.55" /><rect x="561.3" y="415.5" width="12.5" height="7.2" fill="url(#gSel)"/><g transform="translate(551.8000000000001,416.6)"><rect x=".3" y=".3" width="6.2" height="4.4" fill="#fafafa" stroke="#444" stroke-width=".55"/><rect x=".6" y=".6" width="2.6" height="3.8" fill="#444"/></g><g transform="translate(564.2,416.6)"><rect x=".3" y=".3" width="6.2" height="4.4" fill="#555" stroke="#ddd" stroke-width=".55"/><path d="M3.4 .3v4.4" stroke="#ddd" stroke-width=".5"/></g><g transform="translate(576.6,416.6)"><rect x=".3" y=".3" width="6.2" height="4.4" fill="#fafafa" stroke="#444" stroke-width=".55"/><rect x="3.6" y=".6" width="2.6" height="3.8" fill="#444"/></g></g></svg>
<div class="t" style="left:105px;top:403.20px;font-size:5.25px;color:#1a1a1a;-webkit-text-stroke-color:#1a1a1a;">No Selection</div>
<div class="t" style="left:29px;top:414.00px;font-size:5.25px;color:#1a1a1a;-webkit-text-stroke-color:#1a1a1a;">Local</div>
<div class="t" style="left:313.9px;top:414.00px;font-size:5.25px;color:#1a1a1a;-webkit-text-stroke-color:#1a1a1a;">All Output</div>
<div class="p" style="left:435px;width:200px;text-align:center;top:414.10px;font-size:5.25px;color:#111;-webkit-text-stroke-color:#111;">Clear</div>
<div style="left:22px;top:424.4px;width:284.5px;height:43.6px;background:linear-gradient(#fff 0,#fff 8.6px,#eff3fb 8.6px,#eff3fb 16.6px,#fff 16.6px,#fff 24.6px,#eff3fb 24.6px,#eff3fb 32.6px,#fff 32.6px);"></div>
<div style="left:22px;top:424.4px;width:14px;height:43.6px;background:#efefef;border-right:1px solid #c9c9c9;"></div>
<div style="left:307px;top:424.4px;width:282px;height:43.6px;background:#fff;"></div>
<svg style="left:300px;top:413px" width="10" height="60"><rect x="6.1" y="0.6" width="1" height="55" fill="#b4b4b4"/></svg>
</div></div></div></body></html>
